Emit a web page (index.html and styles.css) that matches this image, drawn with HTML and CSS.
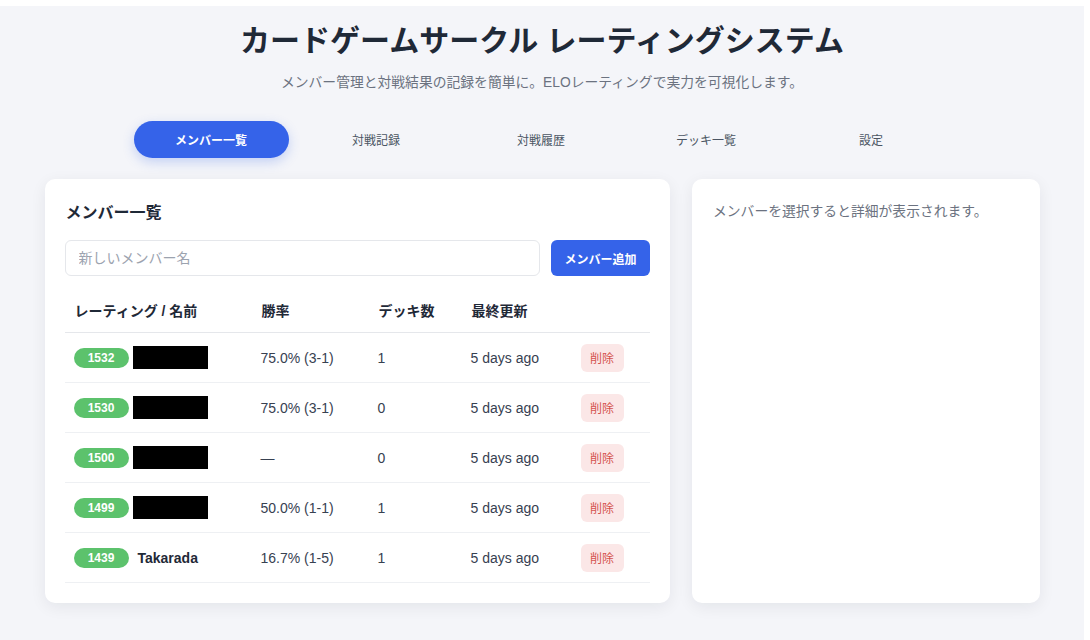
FILE: index.html
```html
<!DOCTYPE html>
<html lang="ja">
<head>
    <meta charset="UTF-8">
    <meta name="viewport" content="width=device-width, initial-scale=1.0">
    <title>カードゲームサークル レーティングシステム</title>
    <link rel="stylesheet" href="styles.css">
</head>
<body>
    <header class="page-header">
        <h1>カードゲームサークル レーティングシステム</h1>
        <p class="lead">メンバー管理と対戦結果の記録を簡単に。ELOレーティングで実力を可視化します。</p>
    </header>

    <nav class="tabs">
        <button class="tab active">メンバー一覧</button>
        <button class="tab">対戦記録</button>
        <button class="tab">対戦履歴</button>
        <button class="tab">デッキ一覧</button>
        <button class="tab">設定</button>
    </nav>

    <main class="layout">
        <section class="card">
            <h2>メンバー一覧</h2>
            <form class="add-form" id="addForm">
                <input type="text" name="name" placeholder="新しいメンバー名">
                <button type="submit" class="btn-primary">メンバー追加</button>
            </form>
            <table class="members">
                <thead>
                    <tr>
                        <th class="col-name">レーティング / 名前</th>
                        <th class="col-rate">勝率</th>
                        <th class="col-decks">デッキ数</th>
                        <th class="col-updated">最終更新</th>
                        <th></th>
                    </tr>
                </thead>
                <tbody>
                    <tr>
                        <td><span class="rating">1532</span><span class="hidden-name"></span></td>
                        <td>75.0% (3-1)</td>
                        <td>1</td>
                        <td>5 days ago</td>
                        <td><button class="btn-delete">削除</button></td>
                    </tr>
                    <tr>
                        <td><span class="rating">1530</span><span class="hidden-name"></span></td>
                        <td>75.0% (3-1)</td>
                        <td>0</td>
                        <td>5 days ago</td>
                        <td><button class="btn-delete">削除</button></td>
                    </tr>
                    <tr>
                        <td><span class="rating">1500</span><span class="hidden-name"></span></td>
                        <td>—</td>
                        <td>0</td>
                        <td>5 days ago</td>
                        <td><button class="btn-delete">削除</button></td>
                    </tr>
                    <tr>
                        <td><span class="rating">1499</span><span class="hidden-name"></span></td>
                        <td>50.0% (1-1)</td>
                        <td>1</td>
                        <td>5 days ago</td>
                        <td><button class="btn-delete">削除</button></td>
                    </tr>
                    <tr>
                        <td><span class="rating">1439</span><span class="member-name">Takarada</span></td>
                        <td>16.7% (1-5)</td>
                        <td>1</td>
                        <td>5 days ago</td>
                        <td><button class="btn-delete">削除</button></td>
                    </tr>
                </tbody>
            </table>
        </section>

        <aside class="card detail">
            <p class="empty">メンバーを選択すると詳細が表示されます。</p>
        </aside>
    </main>

    <script>
        document.getElementById('addForm').addEventListener('submit', (e) => {
            e.preventDefault();
        });
    </script>
</body>
</html>
```

FILE: styles.css
```css
html { background: #fff; }
body {
    margin: 6px 6px 0 0;
    min-height: 634px;
    background: #f4f5f9;
    color: #1f2937;
    font-family: "Liberation Sans", "Noto Sans CJK JP", sans-serif;
}

.page-header { text-align: center; padding-top: 16px; }
.page-header h1 { margin: 0; font-size: 30px; font-weight: 700; line-height: 38px; }
.lead { margin: 13px 0 0; font-size: 13.8px; color: #6b7280; line-height: 20px; }

.tabs { display: flex; justify-content: center; gap: 10px; margin-top: 28px; transform: translateX(-1px); }
.tab {
    width: 155px; height: 37px;
    border: none; border-radius: 999px;
    background: transparent; color: #4b5563;
    font-family: inherit; font-size: 12px;
    cursor: pointer;
}
.tab.active { background: #3563e9; color: #fff; font-weight: 700; box-shadow: 0 4px 12px rgba(53, 99, 233, 0.25); }

.layout {
    display: grid;
    grid-template-columns: 1.8fr 1fr;
    gap: 22px;
    width: 995px;
    margin: 21px auto 0;
}
.card {
    background: #fff;
    border-radius: 10px;
    padding: 20px;
    box-shadow: 0 4px 16px rgba(17, 24, 39, 0.07);
    height: 424px;
    box-sizing: border-box;
}
.card h2 { margin: 2px 0 0 1px; font-size: 16px; line-height: 24px; }

.add-form { display: flex; gap: 11px; margin-top: 15px; }
.add-form input {
    flex: 1;
    height: 36px;
    box-sizing: border-box;
    border: 1px solid #e5e7eb;
    border-radius: 6px;
    padding: 0 13px;
    font-family: inherit;
    font-size: 14px;
}
.add-form input::placeholder { color: #9ca3af; }
.btn-primary {
    width: 99px; height: 36px;
    border: none; border-radius: 6px;
    background: #3563e9; color: #fff;
    font-family: inherit; font-size: 12px; font-weight: 700;
    cursor: pointer;
}

.members { width: 100%; border-collapse: collapse; margin-top: 14px; font-size: 14px; }
.members th {
    text-align: left; font-weight: 700; height: 40px;
    padding: 0 10px 2px; border-bottom: 1px solid #e5e7eb;
}
.members td {
    height: 49px; padding: 0 10px 0 9px;
    border-bottom: 1px solid #eef0f3;
    color: #374151;
}
.col-name { width: 167px; }
.col-rate { width: 97px; }
.col-decks { width: 73px; }
.col-updated { width: 90px; }

.rating {
    display: inline-block; vertical-align: middle;
    width: 55px; height: 20px; line-height: 20px;
    border-radius: 999px;
    background: #5cc26c; color: #fff;
    text-align: center; font-size: 12px; font-weight: 700;
}
.hidden-name {
    display: inline-block; vertical-align: middle;
    width: 75px; height: 23px; margin-left: 4px;
    background: #000;
}
.member-name { vertical-align: middle; margin-left: 9px; font-weight: 700; color: #1f2937; }

.btn-delete {
    width: 43px; height: 28px;
    border: none; border-radius: 6px;
    background: #fbe7e7; color: #d4524d;
    font-family: inherit; font-size: 12px;
    cursor: pointer;
}

.detail .empty { margin: 1px 0 0 1px; font-size: 13.8px; color: #6b7280; }
```
